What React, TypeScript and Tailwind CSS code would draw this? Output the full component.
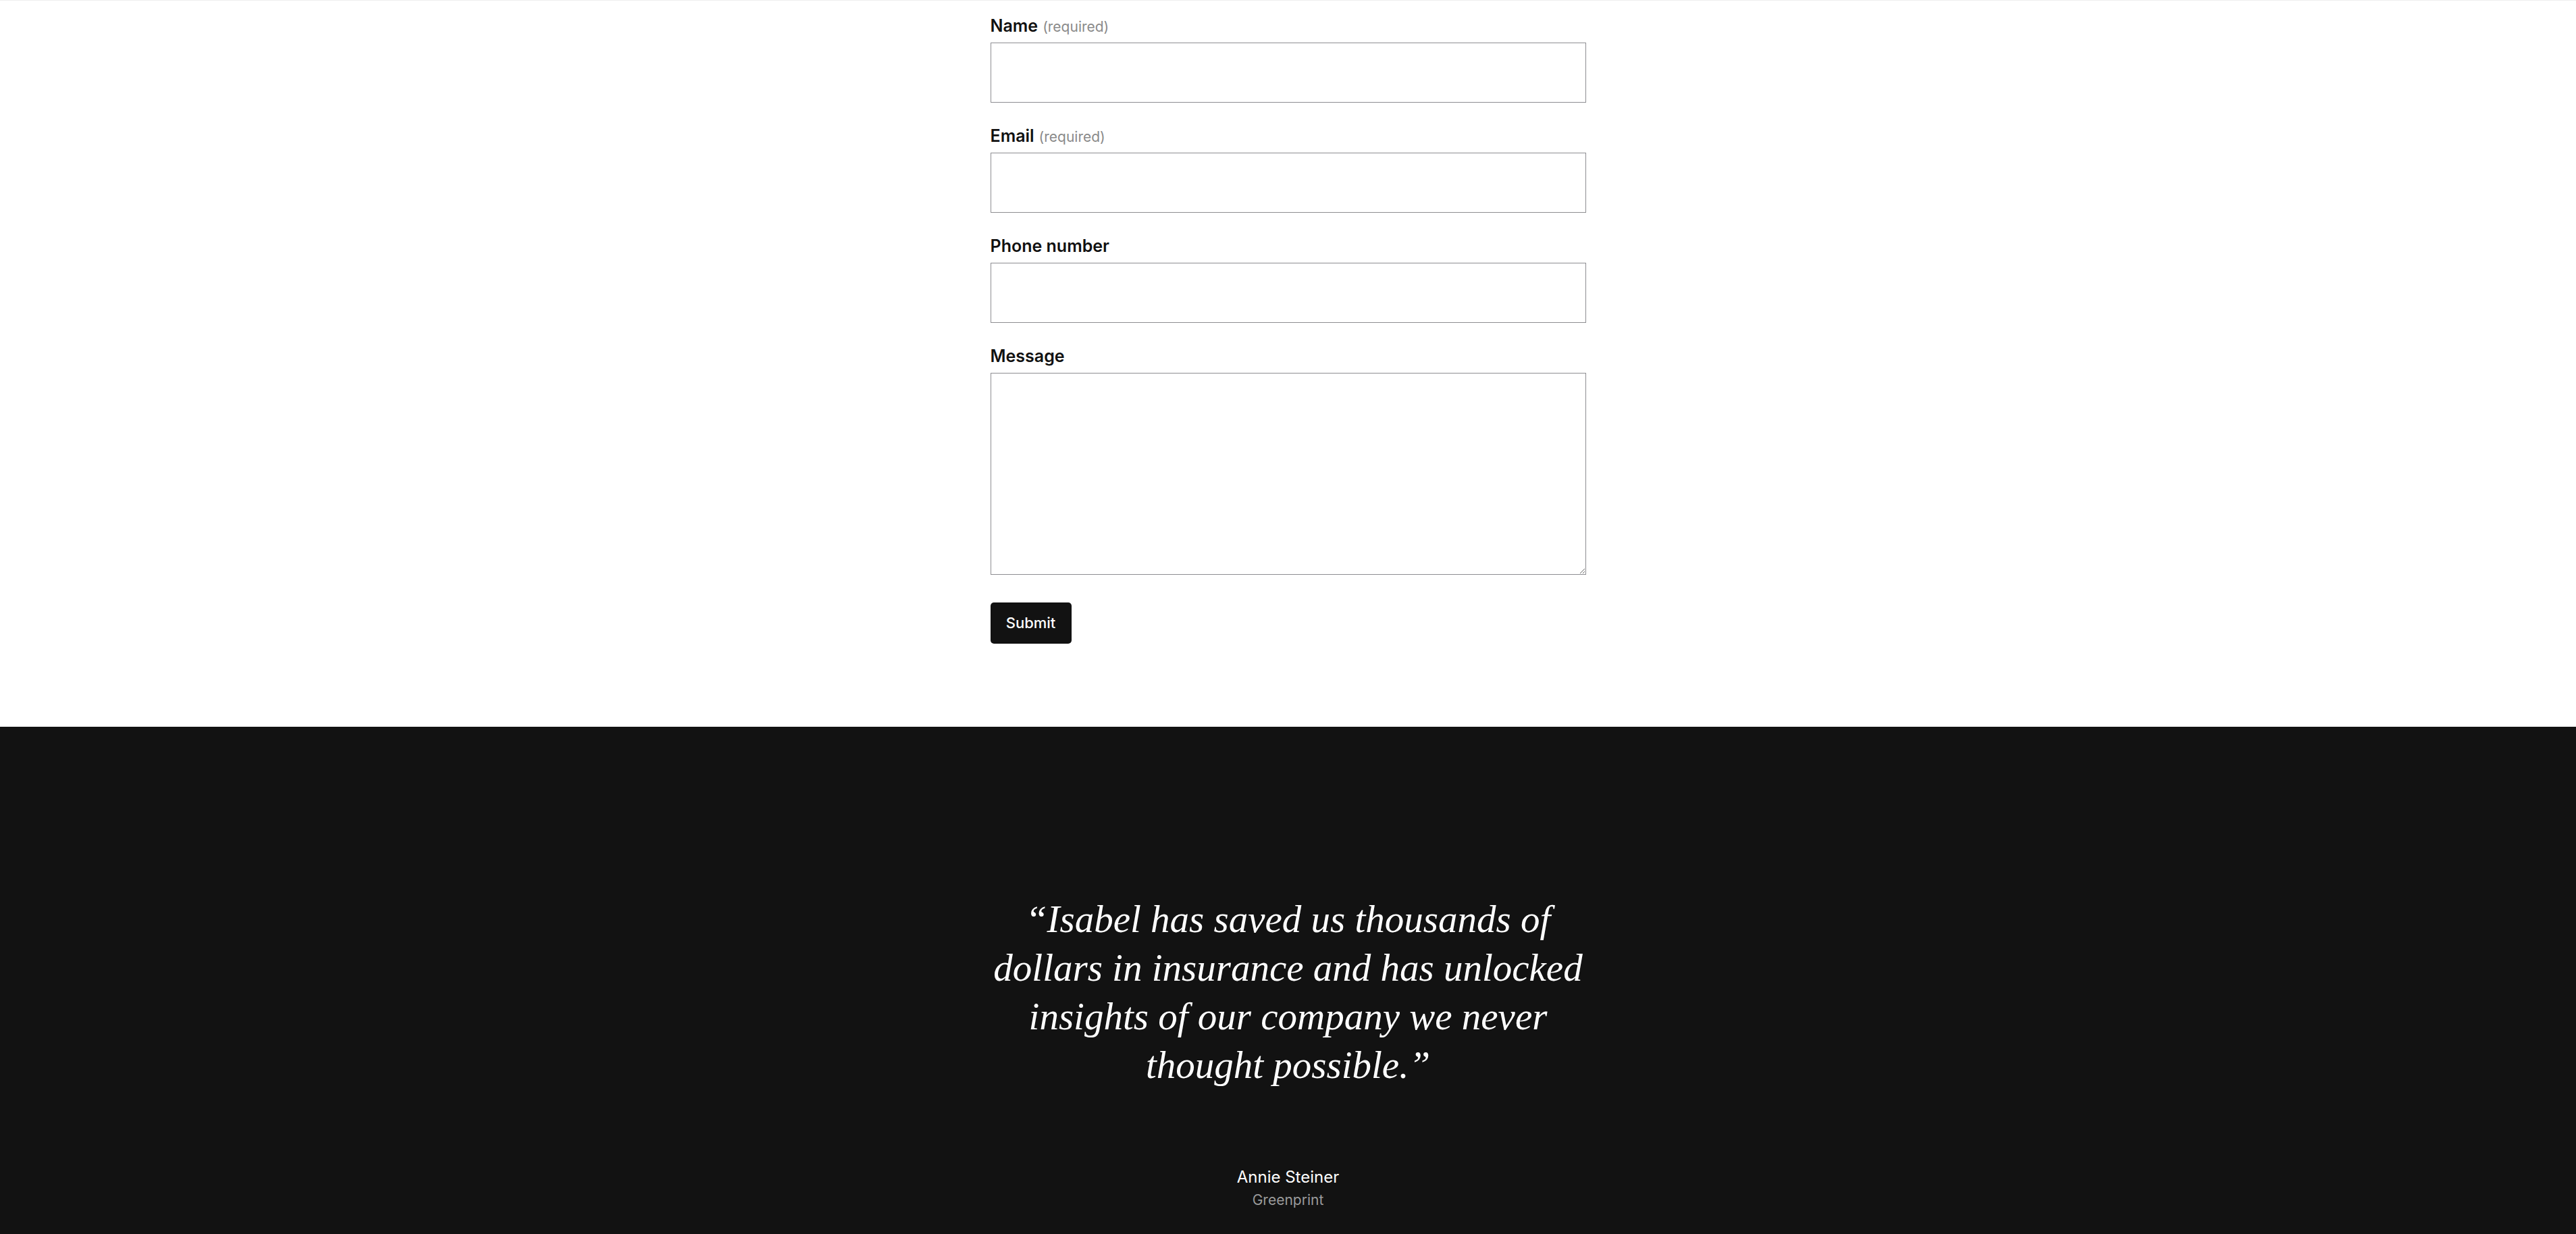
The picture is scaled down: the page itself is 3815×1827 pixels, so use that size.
import React from "react";

const Field: React.FC<{
  label: string;
  required?: boolean;
  children: React.ReactNode;
}> = ({ label, required, children }) => (
  <div className="mb-[32px]">
    <label className="flex items-baseline mb-[8px] h-[34px] leading-[34px] text-[25px] font-semibold text-[#111111]">
      {label}
      {required && (
        <span className="ml-[7px] text-[21px] font-normal text-[#8a8a8a]">(required)</span>
      )}
    </label>
    {children}
  </div>
);

export default function App() {
  return (
    <div className="min-h-[1827px] bg-white font-['Inter',sans-serif]">
      {/* contact form */}
      <div className="border-t border-[#efefef]">
        <form
          className="mx-auto w-[882px] pt-[20px] pb-[123px]"
          onSubmit={(e) => e.preventDefault()}
        >
          <Field label="Name" required>
            <input
              type="text"
              className="block w-full h-[89px] border border-[#8d8d91] bg-white px-4 text-[22px] outline-none"
            />
          </Field>
          <Field label="Email" required>
            <input
              type="email"
              className="block w-full h-[89px] border border-[#8d8d91] bg-white px-4 text-[22px] outline-none"
            />
          </Field>
          <Field label="Phone number">
            <input
              type="tel"
              className="block w-full h-[89px] border border-[#8d8d91] bg-white px-4 text-[22px] outline-none"
            />
          </Field>
          <div>
            <label className="block mb-[8px] h-[34px] leading-[34px] text-[25px] font-semibold text-[#111111]">
              Message
            </label>
            <textarea className="block w-full h-[299px] border border-[#8d8d91] bg-white p-4 text-[22px] outline-none" />
          </div>
          <button
            type="submit"
            className="mt-[41px] flex items-center justify-center w-[120px] h-[61px] rounded-[5px] bg-[#121212] text-white text-[22px] font-medium"
          >
            Submit
          </button>
        </form>
      </div>

      {/* testimonial */}
      <section className="bg-[#121212] min-h-[752px] pt-[249px] pb-[60px]">
        <blockquote className="mx-auto w-[900px] text-center text-white italic text-[57px] leading-[72px] font-['Liberation_Serif',serif]">
          “Isabel has saved us thousands of
          <br />
          dollars in insurance and has unlocked
          <br />
          insights of our company we never
          <br />
          thought possible.”
        </blockquote>
        <div className="mt-[113px] text-center">
          <div className="text-[24px] leading-[34px] text-white">Annie Steiner</div>
          <div className="mt-[2px] text-[21px] leading-[30px] text-[#9a9a9a]">Greenprint</div>
        </div>
      </section>
    </div>
  );
}
